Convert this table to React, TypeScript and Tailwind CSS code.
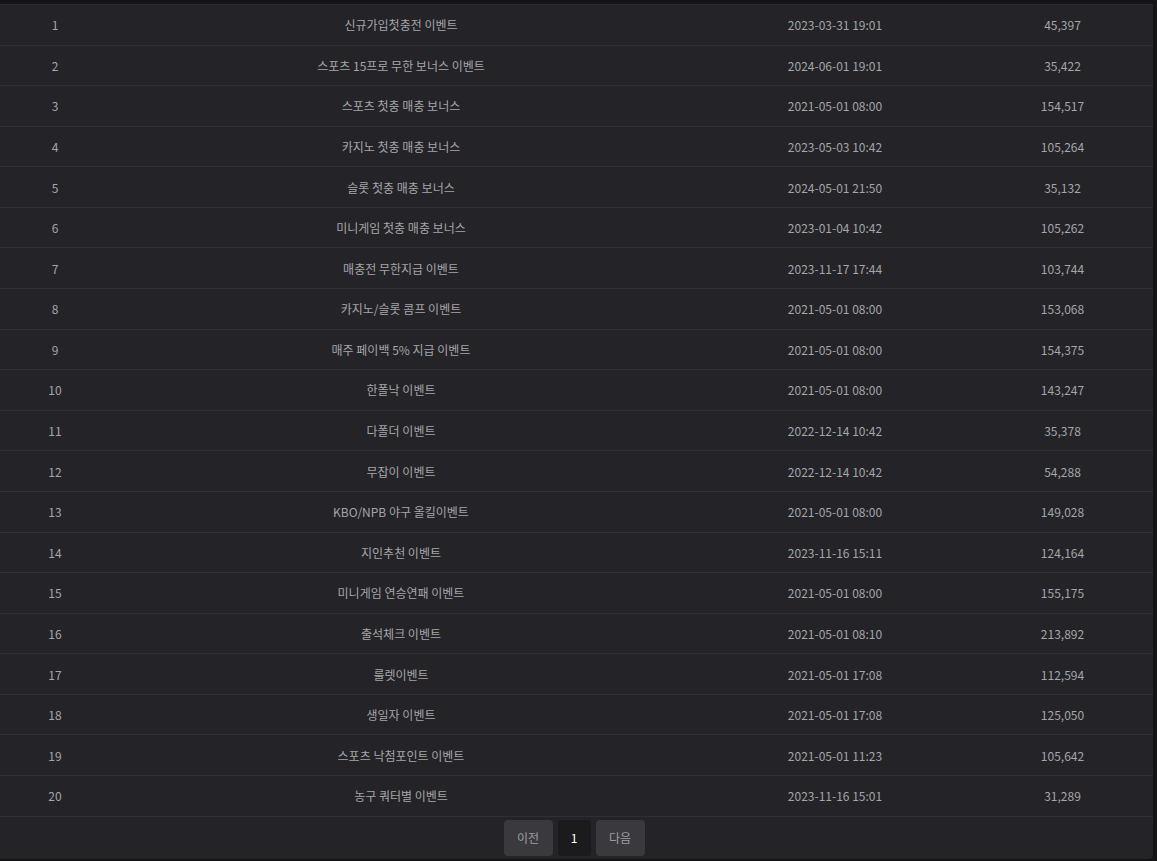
import React from "react";

interface EventRow {
  id: number;
  title: string;
  date: string;
  views: string;
}

const rows: EventRow[] = [
  { id: 1, title: "신규가입첫충전 이벤트", date: "2023-03-31 19:01", views: "45,397" },
  { id: 2, title: "스포츠 15프로 무한 보너스 이벤트", date: "2024-06-01 19:01", views: "35,422" },
  { id: 3, title: "스포츠 첫충 매충 보너스", date: "2021-05-01 08:00", views: "154,517" },
  { id: 4, title: "카지노 첫충 매충 보너스", date: "2023-05-03 10:42", views: "105,264" },
  { id: 5, title: "슬롯 첫충 매충 보너스", date: "2024-05-01 21:50", views: "35,132" },
  { id: 6, title: "미니게임 첫충 매충 보너스", date: "2023-01-04 10:42", views: "105,262" },
  { id: 7, title: "매충전 무한지급 이벤트", date: "2023-11-17 17:44", views: "103,744" },
  { id: 8, title: "카지노/슬롯 콤프 이벤트", date: "2021-05-01 08:00", views: "153,068" },
  { id: 9, title: "매주 페이백 5% 지급 이벤트", date: "2021-05-01 08:00", views: "154,375" },
  { id: 10, title: "한폴낙 이벤트", date: "2021-05-01 08:00", views: "143,247" },
  { id: 11, title: "다폴더 이벤트", date: "2022-12-14 10:42", views: "35,378" },
  { id: 12, title: "무잡이 이벤트", date: "2022-12-14 10:42", views: "54,288" },
  { id: 13, title: "KBO/NPB 야구 올킬이벤트", date: "2021-05-01 08:00", views: "149,028" },
  { id: 14, title: "지인추천 이벤트", date: "2023-11-16 15:11", views: "124,164" },
  { id: 15, title: "미니게임 연승연패 이벤트", date: "2021-05-01 08:00", views: "155,175" },
  { id: 16, title: "출석체크 이벤트", date: "2021-05-01 08:10", views: "213,892" },
  { id: 17, title: "룰렛이벤트", date: "2021-05-01 17:08", views: "112,594" },
  { id: 18, title: "생일자 이벤트", date: "2021-05-01 17:08", views: "125,050" },
  { id: 19, title: "스포츠 낙첨포인트 이벤트", date: "2021-05-01 11:23", views: "105,642" },
  { id: 20, title: "농구 쿼터별 이벤트", date: "2023-11-16 15:01", views: "31,289" },
];

export default function App() {
  return (
    <div
      className="w-[1157px] h-[861px] bg-[#141416] pt-[4px] pr-[4px] pb-[2px] overflow-hidden"
      style={{ fontFamily: '"Noto Sans CJK KR", "Noto Sans", sans-serif' }}
    >
      <div className="bg-[#232328] border-t border-[#2a2a2f] rounded-br-[4px] text-[12px] text-[#a6a6a8]">
        {/* Event rows */}
        {rows.map((row) => (
          <div
            key={row.id}
            className="grid grid-cols-[110px_582px_286px_1fr] items-center h-[40.58px] pt-[1px] border-b border-[#2f2f35]"
          >
            <div className="text-center">{row.id}</div>
            <div className="text-center">{row.title}</div>
            <div className="text-center">{row.date}</div>
            <div className="text-center pr-[6px]">{row.views}</div>
          </div>
        ))}

        {/* Pagination */}
        <div className="flex justify-center gap-[5px] pt-[3px] pb-[3px] pr-[5px]">
          <button className="w-[49px] h-[36px] rounded-[4px] bg-[#3a3a3e] text-[#9d9da0]">이전</button>
          <button className="w-[33px] h-[36px] rounded-[4px] bg-[#1b1b1d] text-white">1</button>
          <button className="w-[49px] h-[36px] rounded-[4px] bg-[#3a3a3e] text-[#9d9da0]">다음</button>
        </div>
      </div>
    </div>
  );
}
